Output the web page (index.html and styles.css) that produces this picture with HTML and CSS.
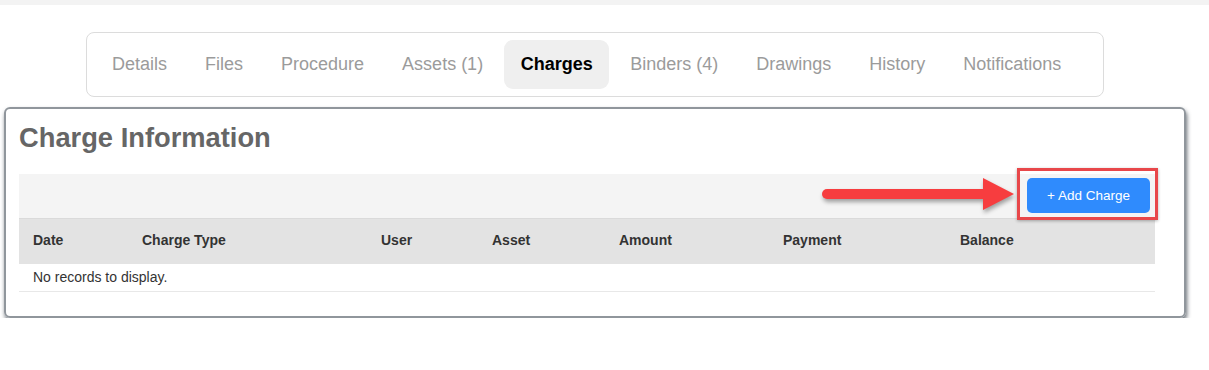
FILE: index.html
```html
<!DOCTYPE html>
<html lang="en">
<head>
    <meta charset="UTF-8">
    <title>Charges</title>
    <link rel="stylesheet" href="styles.css">
</head>
<body>
    <div class="top-strip"></div>

    <nav class="tabs">
        <a class="tab">Details</a>
        <a class="tab">Files</a>
        <a class="tab">Procedure</a>
        <a class="tab">Assets (1)</a>
        <a class="tab active">Charges</a>
        <a class="tab">Binders (4)</a>
        <a class="tab">Drawings</a>
        <a class="tab">History</a>
        <a class="tab">Notifications</a>
    </nav>

    <div class="card">
        <h2 class="card-title">Charge Information</h2>

        <div class="toolbar">
            <svg class="callout-arrow" width="200" height="45" viewBox="0 0 200 45">
                <line x1="8" y1="20" x2="170" y2="20" stroke="#f73d3f" stroke-width="10" stroke-linecap="round"/>
                <polygon points="164,4 195,20 164,36" fill="#f73d3f"/>
            </svg>
            <div class="callout-box"></div>
            <button class="add-btn">+ Add Charge</button>
        </div>

        <table class="grid">
            <colgroup>
                <col style="width:109px">
                <col style="width:239px">
                <col style="width:111px">
                <col style="width:127px">
                <col style="width:164px">
                <col style="width:177px">
                <col>
            </colgroup>
            <thead>
                <tr>
                    <th>Date</th>
                    <th>Charge Type</th>
                    <th>User</th>
                    <th>Asset</th>
                    <th>Amount</th>
                    <th>Payment</th>
                    <th>Balance</th>
                </tr>
            </thead>
            <tbody>
                <tr>
                    <td colspan="7">No records to display.</td>
                </tr>
            </tbody>
        </table>
    </div>
</body>
</html>
```

FILE: styles.css
```css
body {
    margin: 0;
    font-family: "Liberation Sans", Arial, sans-serif;
    background: #fff;
    color: #333;
}

.top-strip {
    height: 5px;
    background-color: #f3f3f3;
}

.tabs {
    display: flex;
    gap: 4px;
    box-sizing: border-box;
    width: 1018px;
    height: 65px;
    margin: 27px 0 0 86px;
    padding: 7px 8px;
    border: 1px solid #dcdcdc;
    border-radius: 8px;
}

.tab {
    padding: 14px 17px;
    font-size: 18px;
    line-height: 20px;
    color: #9b9b9b;
    border-radius: 9px;
    cursor: pointer;
}

.tab.active {
    padding: 14px 16.5px;
    background-color: #efefef;
    color: #000;
    font-weight: bold;
}

.card {
    box-sizing: border-box;
    width: 1182px;
    height: 211px;
    margin: 10px 0 0 4px;
    padding: 13px 13px 0 13px;
    border: 2px solid #90969c;
    border-radius: 6px;
    box-shadow: 1px 3px 4px rgba(40, 50, 60, 0.7);
}

.card-title {
    margin: 0 0 21px 0;
    font-size: 27.3px;
    line-height: 31px;
    color: #666;
}

.toolbar {
    position: relative;
    display: flex;
    justify-content: flex-end;
    align-items: flex-start;
    width: 1136px;
    height: 44px;
    box-sizing: border-box;
    padding: 4px 5px 0 0;
    background-color: #f4f4f4;
}

.add-btn {
    width: 123px;
    height: 35px;
    border: none;
    border-radius: 5px;
    background-color: #2f8bfd;
    color: #fff;
    font-family: "Liberation Sans", Arial, sans-serif;
    font-size: 13.5px;
    cursor: pointer;
}

.callout-arrow {
    position: absolute;
    left: 800px;
    top: 0;
    filter: drop-shadow(1px 3px 2px rgba(0, 0, 0, 0.35));
}

.callout-box {
    position: absolute;
    left: 998px;
    top: -6px;
    width: 141px;
    height: 52px;
    box-sizing: border-box;
    border: 3px solid #e8474a;
    box-shadow: 0 1px 3px rgba(0, 0, 0, 0.3);
}

.grid {
    width: 1136px;
    border-collapse: collapse;
    table-layout: fixed;
    font-size: 14px;
}

.grid th {
    height: 41px;
    padding: 0 14px 4px 14px;
    text-align: left;
    background-color: #e3e3e3;
    border-top: 1px solid #dadada;
    color: #333;
}

.grid td {
    height: 25px;
    padding: 0 14px 2px 14px;
    border-bottom: 1px solid #e8e8e8;
    color: #333;
}
```
